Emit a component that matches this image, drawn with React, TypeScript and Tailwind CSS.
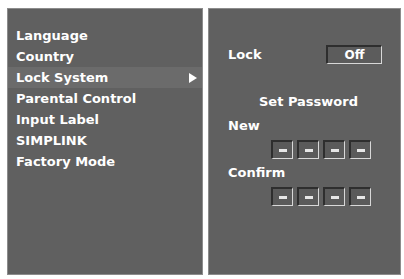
const items = [
  "Language",
  "Country",
  "Lock System",
  "Parental Control",
  "Input Label",
  "SIMPLINK",
  "Factory Mode",
]

function DigitBox() {
  return (
    <div className="flex h-[19px] w-[22px] items-center justify-center border-t-2 border-l-2 border-b border-r border-t-[#2e2e2e] border-l-[#2e2e2e] border-b-[#d8d8d8] border-r-[#d8d8d8] bg-[#5a5a5a]">
      <div className="h-[3px] w-[8px] bg-[#e6e6e6]" />
    </div>
  )
}

function DigitRow() {
  return (
    <div className="ml-[43px] flex gap-[4px]">
      <DigitBox />
      <DigitBox />
      <DigitBox />
      <DigitBox />
    </div>
  )
}

export default function App() {
  return (
    <div
      className="flex h-[279px] w-[404px] gap-[5px] bg-white pl-[7px] pt-[8px] text-white"
      style={{ fontFamily: "'DejaVu Sans', sans-serif" }}
    >
      <div className="flex h-[267px] w-[196px] flex-col border border-[#8c8c8c] bg-[#606060] pt-[16px]">
        {items.map((item) => (
          <div
            key={item}
            className={
              item === "Lock System"
                ? "flex h-[21px] items-center justify-between bg-[#6b6b6b] pl-[8px] pr-[5px] text-[13px] font-bold leading-none"
                : "flex h-[21px] items-center pl-[8px] text-[13px] font-bold leading-none"
            }
          >
            <span>{item}</span>
            {item === "Lock System" && (
              <span className="h-0 w-0 border-y-[5px] border-l-[8px] border-y-transparent border-l-white" />
            )}
          </div>
        ))}
      </div>

      <div className="flex h-[267px] w-[193px] flex-col border border-[#8c8c8c] bg-[#606060] pl-[19px] pt-[36px] text-[13px] font-bold leading-none">
        <div className="flex h-[19px] items-center">
          <span className="w-[98px]">Lock</span>
          <div className="flex h-[19px] w-[56px] items-center justify-center border-t-2 border-l-2 border-b border-r border-t-[#2e2e2e] border-l-[#2e2e2e] border-b-[#d8d8d8] border-r-[#d8d8d8] bg-[#5c5c5c] text-[12px] font-semibold">
            Off
          </div>
        </div>
        <div className="mt-[29px] flex h-[16px] items-center pl-[31px]">Set Password</div>
        <div className="mt-[8px] flex h-[16px] items-center">New</div>
        <div className="mt-[7px]">
          <DigitRow />
        </div>
        <div className="mt-[5px] flex h-[16px] items-center">Confirm</div>
        <div className="mt-[7px]">
          <DigitRow />
        </div>
      </div>
    </div>
  )
}
